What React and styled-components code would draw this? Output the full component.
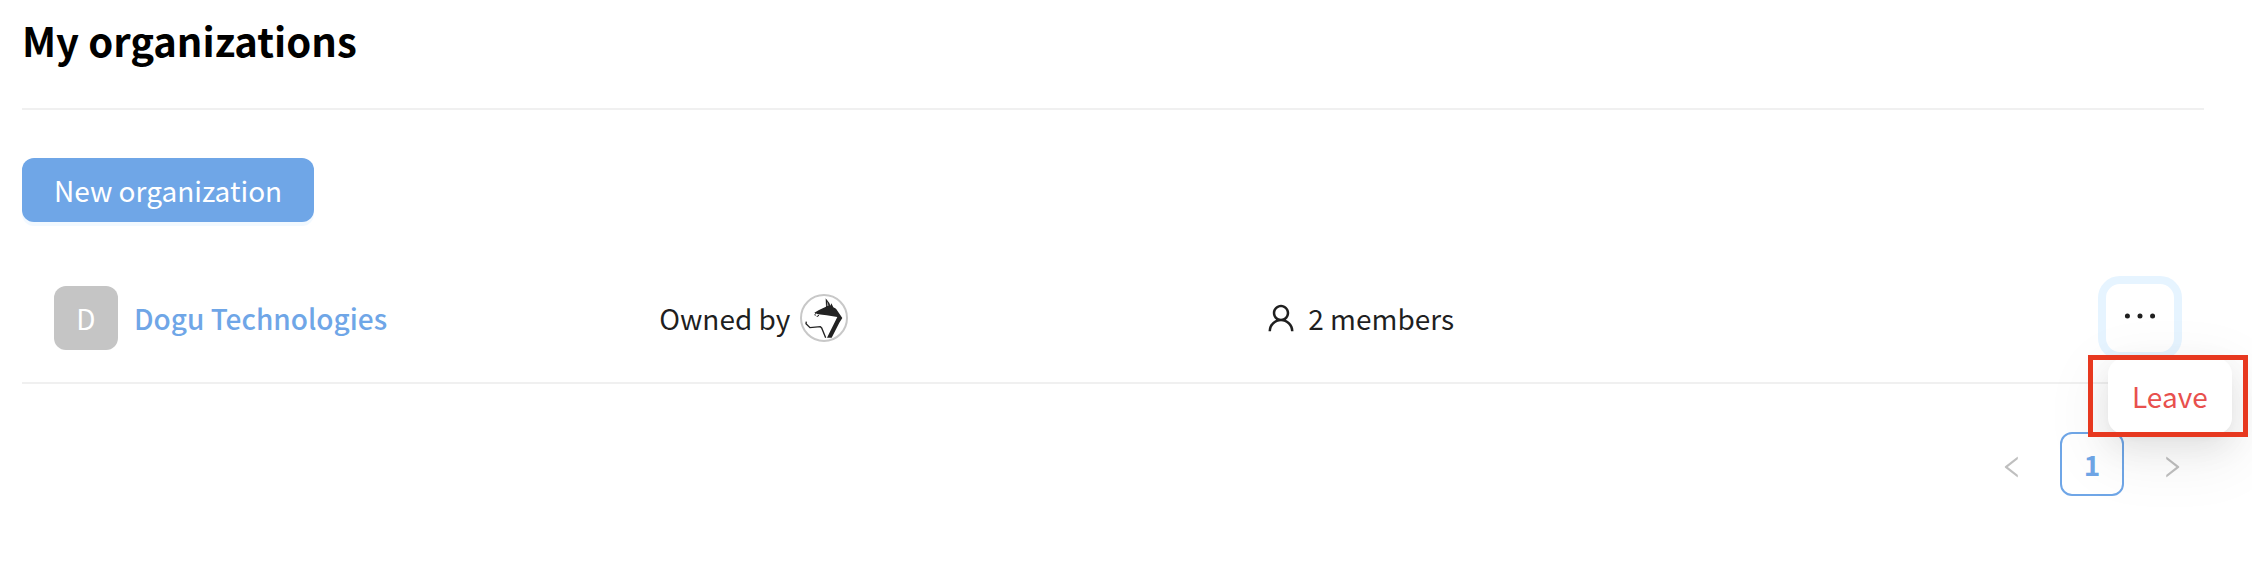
import React from "react";
import styled, { createGlobalStyle } from "styled-components";
import { AiOutlineUser, AiOutlineEllipsis, AiOutlineLeft, AiOutlineRight } from "react-icons/ai";

const GlobalStyle = createGlobalStyle`
  * { box-sizing: border-box; }
  body {
    margin: 0;
    background: #fff;
    color: rgba(0, 0, 0, 0.88);
    font-family: "Noto Sans CJK KR", "Noto Sans", sans-serif;
    font-size: 28px;
    line-height: 44px;
    overflow-x: hidden;
  }
  button { font: inherit; cursor: pointer; }
`;

const Page = styled.main`
  padding: 14px 48px 72px 22px;
`;

const Header = styled.header`
  padding-bottom: 42px;
  border-bottom: 2px solid #f0f0f0;
`;

const Title = styled.h1`
  margin: 0;
  color: #000;
  font-size: 40px;
  line-height: 52px;
  font-weight: 700;
`;

const PrimaryButton = styled.button`
  display: block;
  height: 64px;
  margin: 48px 0 32px;
  padding: 0 32px;
  border: 0;
  border-radius: 12px;
  background: #6fa6e7;
  color: #fff;
  box-shadow: 0 4px 0 rgba(5, 145, 255, 0.05);
`;

const List = styled.ul`
  margin: 0;
  padding: 0;
  list-style: none;
`;

const Item = styled.li`
  display: grid;
  grid-template-columns: 2fr 2fr 2fr 1fr;
  align-items: center;
  padding: 32px;
  border-bottom: 2px solid #f0f0f0;
`;

const Cell = styled.div`
  display: flex;
  align-items: center;
  justify-content: ${(p) => (p.$end ? "flex-end" : "flex-start")};
  gap: ${(p) => p.$gap || 0}px;
  min-width: 0;
  white-space: nowrap;
`;

const Avatar = styled.span`
  display: flex;
  align-items: center;
  justify-content: center;
  width: 64px;
  height: 64px;
  border-radius: 12px;
  background: #c5c5c5;
  color: #fff;
`;

const OrgLink = styled.a`
  color: #6fa6e7;
  font-weight: 500;
  text-decoration: none;
`;

const OwnerPicture = styled.svg`
  width: 48px;
  height: 48px;
`;

const MenuAnchor = styled.div`
  position: relative;
`;

const MoreButton = styled.button`
  display: flex;
  align-items: center;
  justify-content: center;
  width: 64px;
  height: 64px;
  padding: 0 0 4px;
  border: 0;
  border-radius: 12px;
  outline: 8px solid #e6f4ff;
  outline-offset: 2px;
  background: #fff;
  color: inherit;
`;

const Menu = styled.div`
  position: absolute;
  z-index: 1;
  top: 72px;
  left: 0;
  padding: 8px;
  border-radius: 16px;
  background: #fff;
  box-shadow: 0 12px 32px 0 rgba(0, 0, 0, 0.08), 0 6px 12px -8px rgba(0, 0, 0, 0.12),
    0 18px 56px 16px rgba(0, 0, 0, 0.05);
`;

const MenuItem = styled.button`
  display: block;
  padding: 8px 16px;
  border: 0;
  border-radius: 8px;
  background: none;
  color: #e8504d;
`;

const Highlight = styled.div`
  position: absolute;
  inset: -3px -16px -3px -20px;
  border: 5px solid #e7381f;
  pointer-events: none;
`;

const Pagination = styled.nav`
  display: flex;
  justify-content: flex-end;
  gap: 16px;
  margin-top: 48px;
`;

const PageButton = styled.button`
  display: flex;
  align-items: center;
  justify-content: center;
  width: 64px;
  height: 64px;
  padding: ${(p) => (p.$current ? "0" : "6px 0 0")};
  border: 2px solid ${(p) => (p.$current ? "#6fa6e7" : "transparent")};
  border-radius: 12px;
  background: ${(p) => (p.$current ? "#fff" : "none")};
  color: ${(p) => (p.$current ? "#6fa6e7" : "rgba(0, 0, 0, 0.25)")};
  font-weight: 700;
`;

function DogPicture() {
  return (
    <OwnerPicture viewBox="0 0 144 144" role="img" aria-label="Owner">
      <circle cx="72" cy="72" r="69" fill="#fff" stroke="#c8c8c8" strokeWidth="6" />
      <path
        d="M43 56 L57 48 L78 38 L77 13 L88 27 L91 35 L94 28 L100 40 L108 44 L127 72 L118 86 L95 131 L81 131 L112 69 L80 64 L54 61 Z"
        fill="#222"
      />
      <path d="M82 22 L86 35 L80 36 Z" fill="#999" />
      <path d="M48 58 Q42 61 46 65 M56 63 Q56 68 50 67" fill="none" stroke="#222" strokeWidth="3" />
      <path d="M19 83 L18 89 L30 101 L61 98 L65 102 L77 131" fill="none" stroke="#222" strokeWidth="4" />
    </OwnerPicture>
  );
}

export default function App() {
  return (
    <>
      <GlobalStyle />
      <Page>
        <Header>
          <Title>My organizations</Title>
        </Header>
        <PrimaryButton type="button">New organization</PrimaryButton>
        <List>
          <Item>
            <Cell $gap={16}>
              <Avatar>D</Avatar>
              <OrgLink href="#organization">Dogu Technologies</OrgLink>
            </Cell>
            <Cell $gap={10}>
              Owned by
              <DogPicture />
            </Cell>
            <Cell $gap={10}>
              <AiOutlineUser size={34} />
              2 members
            </Cell>
            <Cell $end>
              <MenuAnchor>
                <MoreButton type="button" aria-label="More actions" aria-expanded="true">
                  <AiOutlineEllipsis size={46} />
                </MoreButton>
                <Menu>
                  <MenuItem type="button">Leave</MenuItem>
                  <Highlight />
                </Menu>
              </MenuAnchor>
            </Cell>
          </Item>
        </List>
        <Pagination aria-label="Pages">
          <PageButton type="button" aria-label="Previous page">
            <AiOutlineLeft size={28} />
          </PageButton>
          <PageButton type="button" $current aria-current="page">
            1
          </PageButton>
          <PageButton type="button" aria-label="Next page">
            <AiOutlineRight size={28} />
          </PageButton>
        </Pagination>
      </Page>
    </>
  );
}
